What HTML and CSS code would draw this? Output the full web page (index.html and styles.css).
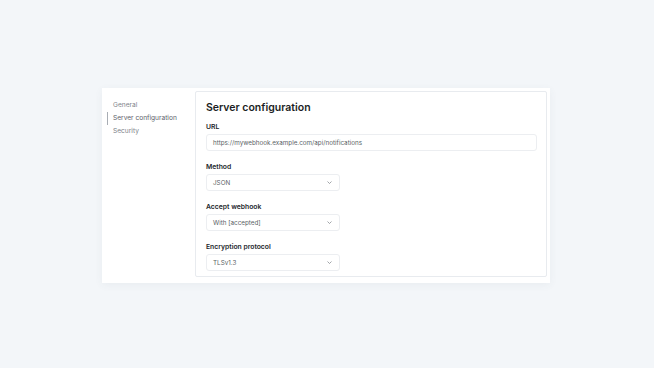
FILE: index.html
```html
<!DOCTYPE html>
<html lang="en">
<head>
    <meta charset="UTF-8">
    <meta name="viewport" content="width=device-width, initial-scale=1.0">
    <title>Server configuration</title>
    <link rel="stylesheet" href="styles.css">
</head>
<body>
    <div class="settings">
        <nav class="sidebar">
            <a href="#" class="nav-item">General</a>
            <a href="#" class="nav-item active">Server configuration</a>
            <a href="#" class="nav-item">Security</a>
        </nav>

        <div class="card">
            <h1>Server configuration</h1>

            <div class="field">
                <label>URL</label>
                <div class="input wide">https://mywebhook.example.com/api/notifications</div>
            </div>

            <div class="field">
                <label>Method</label>
                <div class="input select">
                    <span>JSON</span>
                    <svg class="chevron" viewBox="0 0 10 6"><path d="M1 1l4 4 4-4"/></svg>
                </div>
            </div>

            <div class="field">
                <label>Accept webhook</label>
                <div class="input select">
                    <span>With [accepted]</span>
                    <svg class="chevron" viewBox="0 0 10 6"><path d="M1 1l4 4 4-4"/></svg>
                </div>
            </div>

            <div class="field">
                <label>Encryption protocol</label>
                <div class="input select">
                    <span>TLSv1.3</span>
                    <svg class="chevron" viewBox="0 0 10 6"><path d="M1 1l4 4 4-4"/></svg>
                </div>
            </div>
        </div>
    </div>
</body>
</html>
```

FILE: styles.css
```css
* {
    margin: 0;
    padding: 0;
    box-sizing: border-box;
    font-family: 'Inter', sans-serif;
}

body {
    background: #f3f6f9;
    min-height: 100vh;
    padding: 88px 0 0 102px;
}

.settings {
    width: 448px;
    height: 195px;
    background: #fff;
    display: flex;
    box-shadow: 0 2px 8px rgba(60, 80, 110, 0.06);
}

.sidebar {
    width: 93px;
    padding: 11px 0 0 5px;
    display: flex;
    flex-direction: column;
}

.nav-item {
    font-size: 6.6px;
    line-height: 13px;
    color: #7d8289;
    text-decoration: none;
    padding-left: 5px;
    border-left: 1px solid transparent;
}

.nav-item.active {
    color: #5d626a;
    border-left-color: #a8adb4;
}

.card {
    flex: 1;
    margin: 3px 3px 6px 0;
    border: 1px solid #e8ebef;
    border-radius: 2px;
    padding: 8px 9px 0 10px;
}

h1 {
    font-size: 10.5px;
    line-height: 15px;
    font-weight: 600;
    color: #1b1e24;
    margin-bottom: 7px;
}

.field {
    margin-bottom: 11px;
}

label {
    display: block;
    font-size: 6.8px;
    line-height: 10px;
    font-weight: 600;
    color: #22262c;
    margin-bottom: 2px;
}

.input {
    height: 17px;
    border: 1px solid #eceef1;
    border-radius: 3px;
    padding: 0 6px;
    font-size: 6.3px;
    color: #5a5f66;
    display: flex;
    align-items: center;
}

.select {
    width: 134px;
    justify-content: space-between;
}

.chevron {
    width: 5px;
    height: 3px;
    margin-right: 1px;
    fill: none;
    stroke: #70757c;
    stroke-width: 1.3;
}
```
